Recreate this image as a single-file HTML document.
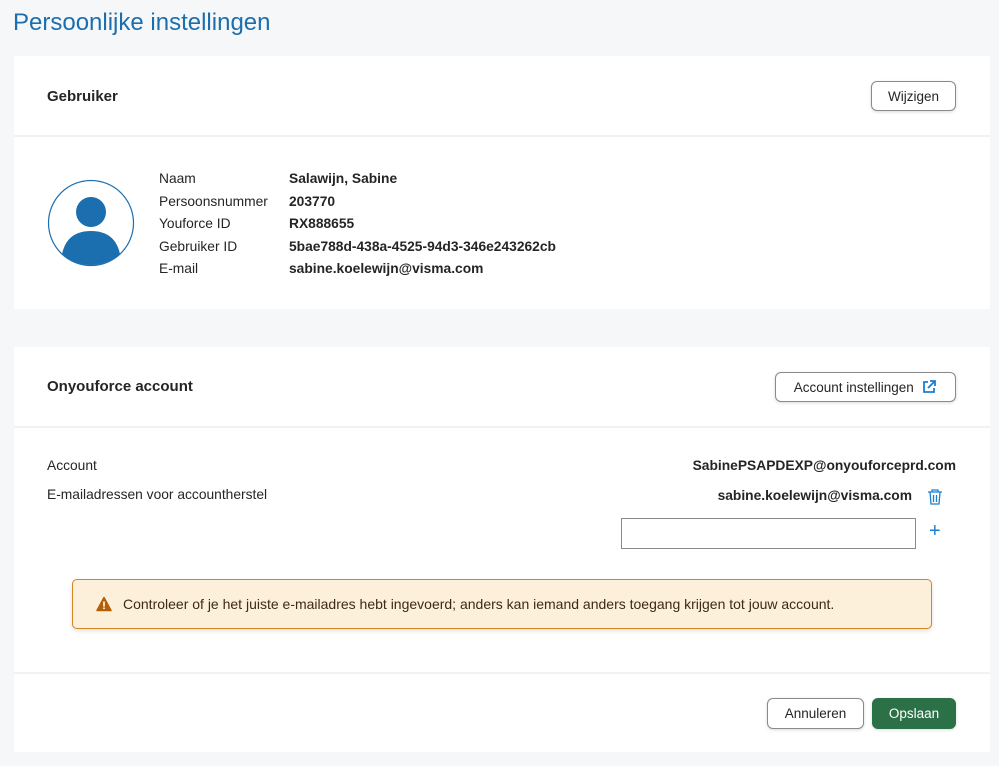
<!DOCTYPE html>
<html><head><meta charset="utf-8"><style>
*{margin:0;padding:0;box-sizing:border-box}
body{width:999px;height:766px;background:#f6f7f9;font-family:"Liberation Sans",sans-serif;color:#252525;position:relative;overflow:hidden;font-size:13.5px}
.a{position:absolute}
h1{position:absolute;left:13px;top:9px;font-size:24px;font-weight:normal;color:#1b6fae}
.card{position:absolute;left:14px;width:976px;background:#fff}
.line{position:absolute;left:0;right:0;height:2px;background:#f1f2f4}
.b{font-weight:bold}
.btn{position:absolute;border:1px solid #8a8a8a;border-radius:6px;background:#fff;font-size:13.5px;display:flex;align-items:center;justify-content:center;box-shadow:0 1px 3px rgba(0,0,0,.15)}
</style></head><body>
<h1>Persoonlijke instellingen</h1>
<div class="card" style="top:56px;height:253px">
 <div class="a b" style="left:33px;top:32px;font-size:15px">Gebruiker</div>
 <div class="btn" style="left:857px;top:25px;width:85px;height:30px">Wijzigen</div>
 <div class="line" style="top:79px"></div>
 <svg class="a" style="left:33px;top:123px" width="88" height="88" viewBox="0 0 88 88"><circle cx="44" cy="44" r="42.5" fill="none" stroke="#1b6fae" stroke-width="1.2"/><circle cx="44" cy="33" r="15" fill="#1b6fae"/><path d="M15 75 Q20 52 44 52 Q68 52 73 75 Q60 86 44 86 Q28 86 15 75Z" fill="#1b6fae"/></svg>
 <div class="a" style="left:145px;top:112px;line-height:22.5px;font-size:13.8px">Naam<br>Persoonsnummer<br>Youforce ID<br>Gebruiker ID<br>E-mail</div>
 <div class="a b" style="left:275px;top:112px;line-height:22.5px;font-size:13.8px">Salawijn, Sabine<br>203770<br>RX888655<br>5bae788d-438a-4525-94d3-346e243262cb<br>sabine.koelewijn@visma.com</div>
</div>
<div class="card" style="top:347px;height:405px">
 <div class="a b" style="left:33px;top:31px;font-size:15px">Onyouforce account</div>
 <div class="btn" style="left:761px;top:25px;width:181px;height:30px">Account instellingen&nbsp;&nbsp;<svg width="16" height="16" viewBox="0 0 16 16" fill="none" stroke="#1b7fd0" stroke-width="1.8"><path d="M7 3H3v10h10V9"/><path d="M9 2h5v5M14 2L7 9"/></svg></div>
 <div class="line" style="top:79px"></div>
 <div class="a" style="left:33px;top:111px;font-size:13.8px">Account</div>
 <div class="a b" style="right:34px;top:111px;font-size:13.8px">SabinePSAPDEXP@onyouforceprd.com</div>
 <div class="a" style="left:33px;top:140px;font-size:13.8px">E-mailadressen voor accountherstel</div>
 <div class="a b" style="right:78px;top:141px;font-size:13.8px">sabine.koelewijn@visma.com</div>
 <svg class="a" style="left:913px;top:141px" width="16" height="18" viewBox="0 0 16 18" fill="none" stroke="#1b7fd0" stroke-width="1.3"><path d="M1 4h14M5 4V2h6v2M3 4l1 12h8l1-12M6.5 7v7M9.5 7v7"/></svg>
 <div class="a" style="left:607px;top:171px;width:295px;height:31px;border:1px solid #8a8a8a"></div>
 <div class="a" style="left:915px;top:173px;color:#1b7fd0;font-size:20px">+</div>
 <div class="a" style="left:58px;top:232px;width:860px;height:50px;background:#fcf0da;border:1px solid #d68525;border-radius:5px;box-shadow:0 2px 5px rgba(0,0,0,.12)">
  <svg class="a" style="left:23px;top:16px" width="16" height="16" viewBox="0 0 16 16"><path d="M8 1.5L15 14.5H1Z" fill="#b45f06" stroke="#b45f06" stroke-linejoin="round" stroke-width="1.5"/><rect x="7.2" y="5.5" width="1.6" height="5" fill="#fff"/><rect x="7.2" y="11.5" width="1.6" height="1.6" fill="#fff"/></svg>
  <div class="a" style="left:50px;top:16px;font-size:14px;color:#3d2a16">Controleer of je het juiste e-mailadres hebt ingevoerd; anders kan iemand anders toegang krijgen tot jouw account.</div>
 </div>
 <div class="line" style="top:325px"></div>
 <div class="btn" style="left:753px;top:351px;width:97px;height:31px">Annuleren</div>
 <div class="btn" style="left:858px;top:351px;width:84px;height:31px;background:#2c7047;border-color:#2c7047;color:#fff">Opslaan</div>
</div>
</body></html>
